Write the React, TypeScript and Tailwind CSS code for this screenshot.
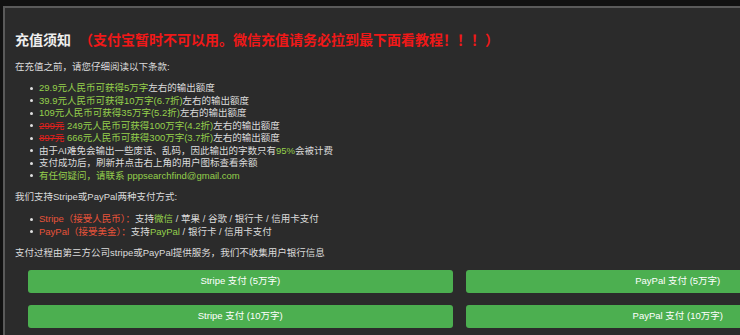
import React from "react";

const font = { fontFamily: '"Liberation Sans", "Noto Sans CJK SC", sans-serif' };

const G = ({ children }: { children: React.ReactNode }) => (
  <span className="text-[#95d04c]">{children}</span>
);

const Old = ({ children }: { children: React.ReactNode }) => (
  <span className="text-[#e0201c] line-through">{children}</span>
);

const Item = ({ children }: { children: React.ReactNode }) => (
  <li className="flex items-center">
    <span className="ml-[15px] mr-[6px] h-[3px] w-[3px] shrink-0 rounded-full bg-[#e0e0e0]" />
    <span>{children}</span>
  </li>
);

const buttons = [
  "Stripe 支付 (5万字)",
  "PayPal 支付 (5万字)",
  "Stripe 支付 (10万字)",
  "PayPal 支付 (10万字)",
];

export default function App() {
  return (
    <div className="h-[335px] w-[740px] overflow-hidden bg-[#111111] pl-[3px] pt-[6px]" style={font}>
      <div className="h-[400px] w-[910px] border-l-2 border-t-2 border-[#5a5a5a] bg-[#2b2b2b] px-[10px] pt-[22px] text-[9.5px] leading-[12.5px] text-[#dcdcdc]">
        {/* Title */}
        <h2 className="flex items-center text-[14px] leading-[20px] font-bold">
          <span className="text-[#eeeeee]">充值须知</span>
          <span className="ml-[8px] text-[#f01818]">（支付宝暂时不可以用。微信充值请务必拉到最下面看教程！！！）</span>
        </h2>

        <p className="mt-[11px]">在充值之前，请您仔细阅读以下条款:</p>

        <ul className="mt-[8.5px]">
          <Item><G>29.9元人民币可获得5万字</G>左右的输出额度</Item>
          <Item><G>39.9元人民币可获得10万字(6.7折)</G>左右的输出额度</Item>
          <Item><G>109元人民币可获得35万字(5.2折)</G>左右的输出额度</Item>
          <Item><Old>299元</Old> <G>249元人民币可获得100万字(4.2折)</G>左右的输出额度</Item>
          <Item><Old>897元</Old> <G>666元人民币可获得300万字(3.7折)</G>左右的输出额度</Item>
          <Item>由于AI难免会输出一些废话、乱码，因此输出的字数只有<G>95%</G>会被计费</Item>
          <Item>支付成功后，刷新并点击右上角的用户图标查看余额</Item>
          <Item><G>有任何疑问，请联系 pppsearchfind@gmail.com</G></Item>
        </ul>

        <p className="mt-[8.5px]">我们支持Stripe或PayPal两种支付方式:</p>

        <ul className="mt-[10px]">
          <Item>
            <span className="text-[#e8533a]">Stripe（接受人民币）：</span>
            支持<G>微信</G> / 苹果 / 谷歌 / 银行卡 / 信用卡支付
          </Item>
          <Item>
            <span className="text-[#e8533a]">PayPal（接受美金）：</span>
            支持<G>PayPal</G> / 银行卡 / 信用卡支付
          </Item>
        </ul>

        <p className="mt-[8.5px]">支付过程由第三方公司stripe或PayPal提供服务，我们不收集用户银行信息</p>

        {/* Payment buttons */}
        <div className="mt-[11px] grid grid-cols-2 gap-x-[13px] gap-y-[12px] px-[13px]">
          {buttons.map((b) => (
            <button
              key={b}
              className="h-[23px] rounded-[3px] bg-[#4caf50] text-[9.5px] text-white"
            >
              {b}
            </button>
          ))}
        </div>
      </div>
    </div>
  );
}
